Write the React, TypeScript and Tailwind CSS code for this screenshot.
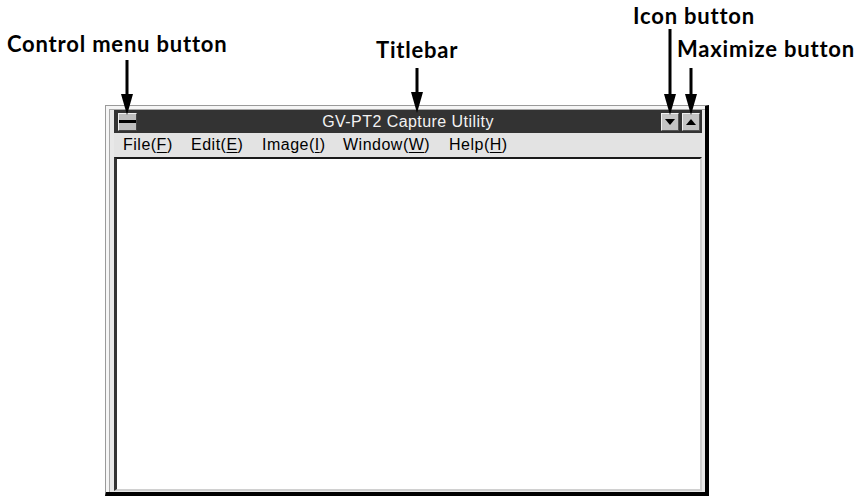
import React from "react";

function Arrow({ x, y1, y2 }: { x: number; y1: number; y2: number }) {
  const h = y2 - y1;
  return (
    <svg
      className="absolute"
      style={{ left: x - 7, top: y1, width: 14, height: h }}
      viewBox={`0 0 14 ${h}`}
    >
      <rect x={5.5} y={0} width={3} height={h - 18} fill="#000" />
      <polygon points={`1,${h - 21} 13,${h - 21} 7,${h}`} fill="#000" />
    </svg>
  );
}

function Label({ text, x, y }: { text: string; x: number; y: number }) {
  return (
    <div
      className="absolute font-bold text-[22px] leading-none tracking-[0.8px] text-black whitespace-nowrap"
      style={{ left: x, top: y, fontFamily: "Lato, 'Open Sans', sans-serif" }}
    >
      {text}
    </div>
  );
}

function MenuItem({ label, key1, w }: { label: string; key1: string; w: string }) {
  return (
    <div className={`${w} shrink-0 whitespace-nowrap`}>
      {label}(<span className="underline underline-offset-2">{key1}</span>)
    </div>
  );
}

function TriButton({ up }: { up?: boolean }) {
  return (
    <div className="w-[18px] h-[18px] flex items-center justify-center bg-[#c4c4c4] border border-t-[#f0f0f0] border-l-[#f0f0f0] border-r-[#555] border-b-[#555]">
      <svg width="10" height="6" viewBox="0 0 10 6">
        {up ? (
          <polygon points="0,6 10,6 5,0" fill="#000" />
        ) : (
          <polygon points="0,0 10,0 5,6" fill="#000" />
        )}
      </svg>
    </div>
  );
}

export default function App() {
  return (
    <div className="relative w-[860px] h-[496px] overflow-hidden bg-white">
      <div className="pl-[105px] pt-[105px]">
        <div className="w-[604px] h-[391px] flex flex-col border-l border-t border-l-[#9a9a9a] border-t-[#9a9a9a] border-r-4 border-b-4 border-r-black border-b-black bg-[#f6f6f6] pl-[3px] pt-[3px]">
          <div className="flex-1 flex flex-col border-l border-t border-l-[#a8a8a8] border-t-[#a8a8a8] bg-[#e8e8e8] pl-[4px] pr-[3px] pb-[1px]">
            {/* Title bar */}
            <div
              className="relative h-[23px] bg-[#333333] flex items-center pl-[4px] pr-[2px]"
              style={{ fontFamily: "'Liberation Sans', Arial, sans-serif" }}
            >
              <div className="w-[19px] h-[18px] bg-[#bdbdbd] border border-t-[#f0f0f0] border-l-[#f0f0f0] border-r-[#444] border-b-[#444] flex items-center">
                <div className="w-full h-[3px] bg-black" />
              </div>
              <div className="flex-1 text-center text-[16px] tracking-[0.45px] text-[#f2f2f2] leading-none pt-[1px] pl-[18px]">
                GV-PT2 Capture Utility
              </div>
              <div className="flex gap-[3px]">
                <TriButton />
                <TriButton up />
              </div>
            </div>
            {/* Menu bar */}
            <div
              className="h-[24px] bg-[#e3e3e3] flex items-center pl-[9px] text-[16px] tracking-[0.5px] text-black leading-none"
              style={{ fontFamily: "'Liberation Sans', Arial, sans-serif" }}
            >
              <MenuItem label="File" key1="F" w="w-[68px]" />
              <MenuItem label="Edit" key1="E" w="w-[71px]" />
              <MenuItem label="Image" key1="I" w="w-[81px]" />
              <MenuItem label="Window" key1="W" w="w-[106px]" />
              <MenuItem label="Help" key1="H" w="w-[70px]" />
            </div>
            {/* Client area */}
            <div className="flex-1 bg-white border-t-2 border-l-[3px] border-r-2 border-b-2 border-t-[#1a1a1a] border-l-[#333] border-r-[#d0d0d0] border-b-[#d0d0d0]" />
          </div>
        </div>
      </div>

      <Label text="Control menu button" x={7} y={33} />
      <Label text="Titlebar" x={376} y={39} />
      <Label text="Icon button" x={633} y={5} />
      <Label text="Maximize button" x={677} y={38} />

      <Arrow x={127} y1={60} y2={115} />
      <Arrow x={417} y1={68} y2={113} />
      <Arrow x={670} y1={29} y2={115} />
      <Arrow x={691} y1={68} y2={115} />
    </div>
  );
}
